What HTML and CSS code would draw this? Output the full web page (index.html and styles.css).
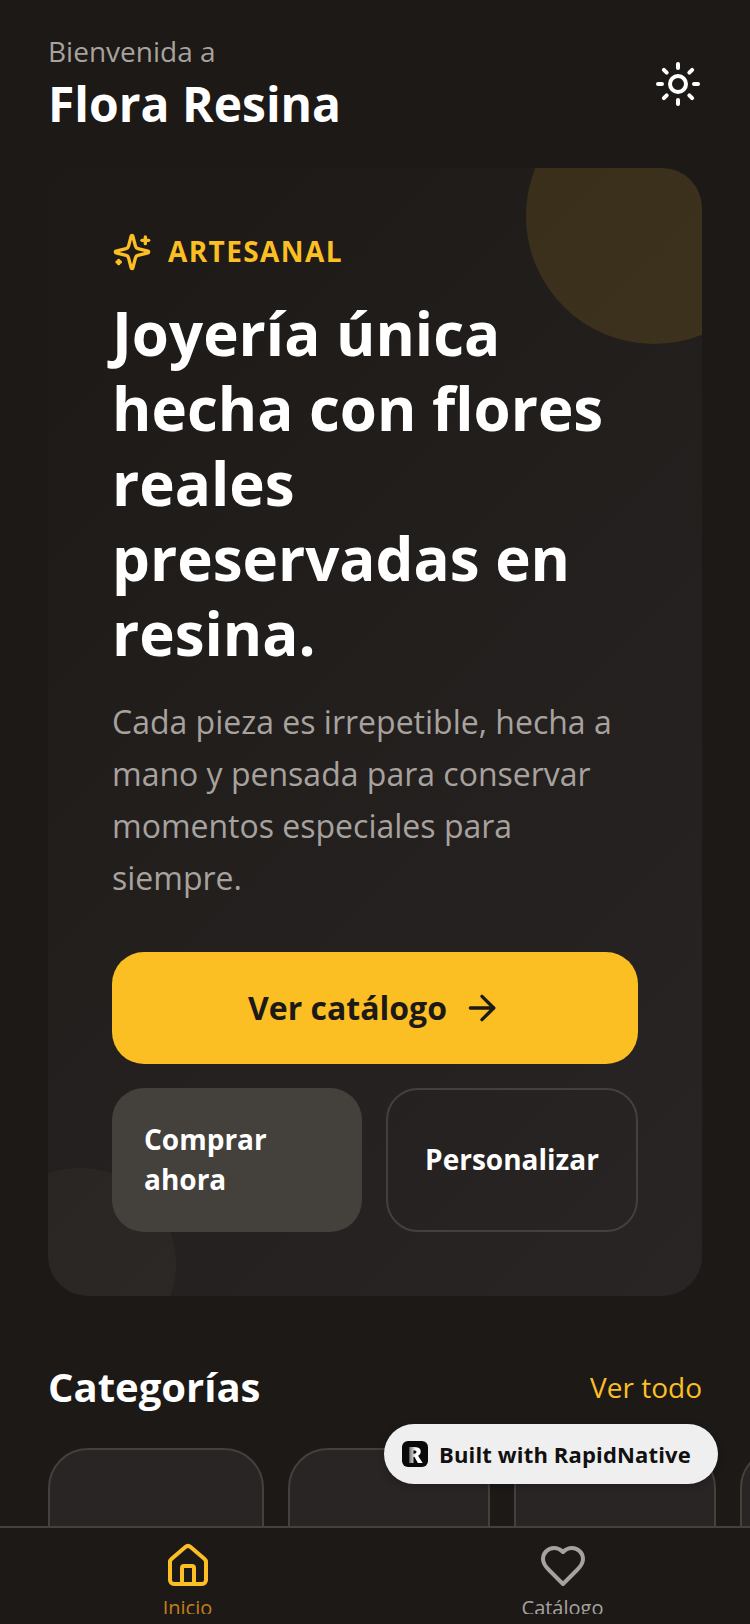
FILE: index.html
```html
<!DOCTYPE html>
<html lang="es">
<head>
    <meta charset="UTF-8">
    <meta name="viewport" content="width=device-width, initial-scale=1.0">
    <title>Flora Resina</title>
    <link rel="stylesheet" href="styles.css">
</head>
<body>
    <div class="app">
        <main class="content">
            <header class="top-bar">
                <div>
                    <p class="welcome">Bienvenida a</p>
                    <h1 class="brand">Flora Resina</h1>
                </div>
                <svg class="icon-sun" viewBox="0 0 24 24" width="48" height="48">
                    <circle cx="12" cy="12" r="4"/>
                    <path d="M12 2v2"/>
                    <path d="M12 20v2"/>
                    <path d="m4.93 4.93 1.41 1.41"/>
                    <path d="m17.66 17.66 1.41 1.41"/>
                    <path d="M2 12h2"/>
                    <path d="M20 12h2"/>
                    <path d="m6.34 17.66-1.41 1.41"/>
                    <path d="m19.07 4.93-1.41 1.41"/>
                </svg>
            </header>

            <section class="hero">
                <div class="hero-circle-top"></div>
                <div class="hero-circle-bottom"></div>
                <div class="hero-body">
                    <div class="hero-tag">
                        <svg class="icon-sparkles" viewBox="0 0 24 24" width="40" height="40">
                            <path d="M9.937 15.5A2 2 0 0 0 8.5 14.063l-6.135-1.582a.5.5 0 0 1 0-.962L8.5 9.936A2 2 0 0 0 9.937 8.5l1.582-6.135a.5.5 0 0 1 .963 0L14.063 8.5A2 2 0 0 0 15.5 9.937l6.135 1.581a.5.5 0 0 1 0 .964L15.5 14.063a2 2 0 0 0-1.437 1.437l-1.582 6.135a.5.5 0 0 1-.963 0z"/>
                            <path d="M20 3v4"/>
                            <path d="M22 5h-4"/>
                            <path d="M4 17v2"/>
                            <path d="M5 18H3"/>
                        </svg>
                        <span class="hero-tag-text">ARTESANAL</span>
                    </div>
                    <h2 class="hero-title">Joyería única hecha con flores reales preservadas en resina.</h2>
                    <p class="hero-text">Cada pieza es irrepetible, hecha a mano y pensada para conservar momentos especiales para siempre.</p>
                    <a class="btn-primary" href="#">
                        <span class="btn-primary-text">Ver catálogo</span>
                        <svg class="icon-arrow" viewBox="0 0 24 24" width="40" height="40">
                            <path d="M5 12h14"/>
                            <path d="m12 5 7 7-7 7"/>
                        </svg>
                    </a>
                    <div class="btn-row">
                        <a class="btn-secondary btn-filled" href="#">Comprar ahora</a>
                        <a class="btn-secondary btn-outline" href="#">Personalizar</a>
                    </div>
                </div>
            </section>

            <section class="categories">
                <div class="section-head">
                    <h2 class="section-title">Categorías</h2>
                    <a class="section-link" href="#">Ver todo</a>
                </div>
                <div class="category-row">
                    <div class="category-card category-wide"></div>
                    <div class="category-card"></div>
                    <div class="category-card"></div>
                    <div class="category-card"></div>
                </div>
            </section>
        </main>

        <nav class="tab-bar">
            <a class="tab tab-active" href="#">
                <svg class="tab-icon" viewBox="0 0 24 24" width="48" height="48">
                    <path d="M15 21v-8a1 1 0 0 0-1-1h-4a1 1 0 0 0-1 1v8"/>
                    <path d="M3 10a2 2 0 0 1 .709-1.528l7-5.999a2 2 0 0 1 2.582 0l7 5.999A2 2 0 0 1 21 10v9a2 2 0 0 1-2 2H5a2 2 0 0 1-2-2z"/>
                </svg>
                <span>Inicio</span>
            </a>
            <a class="tab" href="#">
                <svg class="tab-icon" viewBox="0 0 24 24" width="48" height="48">
                    <path d="M19 14c1.49-1.46 3-3.21 3-5.5A5.5 5.5 0 0 0 16.5 3c-1.76 0-3 .5-4.5 2-1.5-1.5-2.74-2-4.5-2A5.5 5.5 0 0 0 2 8.5c0 2.3 1.5 4.05 3 5.5l7 7Z"/>
                </svg>
                <span>Catálogo</span>
            </a>
        </nav>

        <div class="built-badge">
            <span class="built-logo"><span class="built-logo-letter">R</span></span>
            <span>Built with RapidNative</span>
        </div>
    </div>
</body>
</html>
```

FILE: styles.css
```css
* {
    box-sizing: border-box;
}
body {
    margin: 0;
    background-color: #1c1917;
    font-family: "Open Sans", sans-serif;
    color: #fff;
}
a {
    text-decoration: none;
    color: inherit;
}
svg {
    fill: none;
    stroke: currentColor;
    stroke-width: 2;
    stroke-linecap: round;
    stroke-linejoin: round;
    flex-shrink: 0;
}
.app {
    position: relative;
    width: 750px;
    height: 1624px;
    display: flex;
    flex-direction: column;
    overflow: hidden;
}
.content {
    flex: 1;
    min-height: 0;
    overflow: hidden;
}
.top-bar {
    display: flex;
    justify-content: space-between;
    align-items: center;
    padding: 30px 48px 32px;
}
.icon-sun {
    margin-top: 2px;
}
.welcome {
    margin: 0;
    font-size: 28px;
    line-height: 42px;
    color: #a8a29e;
}
.brand {
    margin: 0;
    font-size: 48px;
    line-height: 64px;
    font-weight: 700;
}
.hero {
    position: relative;
    margin: 0 48px;
    border-radius: 40px;
    overflow: hidden;
    background: linear-gradient(135deg, #1c1917, #292524);
}
.hero-circle-top {
    position: absolute;
    top: -80px;
    right: -80px;
    width: 256px;
    height: 256px;
    border-radius: 50%;
    background-color: rgba(251, 191, 36, 0.12);
}
.hero-circle-bottom {
    position: absolute;
    left: -64px;
    bottom: -64px;
    width: 192px;
    height: 192px;
    border-radius: 50%;
    background-color: rgba(68, 64, 60, 0.2);
}
.hero-body {
    position: relative;
    padding: 64px;
}
.hero-tag {
    display: flex;
    align-items: center;
    gap: 16px;
    color: #fbbf24;
    font-size: 28px;
    font-weight: 700;
    letter-spacing: 1.4px;
}
.hero-tag-text {
    line-height: 36px;
    margin-bottom: 2px;
}
.hero-title {
    margin: 24px 0 25px;
    font-size: 60px;
    line-height: 75px;
    font-weight: 700;
}
.hero-text {
    margin: 0 0 48px;
    font-size: 32px;
    line-height: 52px;
    color: #a8a29e;
}
.btn-primary {
    display: flex;
    justify-content: center;
    align-items: center;
    gap: 15px;
    height: 112px;
    border-radius: 32px;
    background-color: #fbbf24;
    color: #1c1917;
    font-size: 32px;
    font-weight: 700;
}
.btn-primary-text {
    margin-bottom: 2px;
}
.btn-row {
    display: flex;
    gap: 24px;
    margin-top: 24px;
}
.btn-secondary {
    flex: 1;
    min-width: 0;
    display: flex;
    justify-content: center;
    align-items: center;
    padding: 31px 32px 33px;
    border-radius: 32px;
    font-size: 28px;
    line-height: 40px;
    font-weight: 700;
}
.btn-filled {
    background-color: #44403c;
}
.btn-outline {
    padding: 30px 31px 32px;
    border: 2px solid #44403c;
}
.categories {
    padding-top: 63px;
}
.section-head {
    display: flex;
    justify-content: space-between;
    align-items: center;
    padding: 0 48px;
}
.section-title {
    margin: 0;
    font-size: 40px;
    line-height: 56px;
    font-weight: 700;
}
.section-link {
    font-size: 28px;
    line-height: 40px;
    color: #fbbf24;
}
.category-row {
    display: flex;
    gap: 24px;
    padding-left: 48px;
    margin-top: 33px;
}
.category-card {
    flex: 0 0 202px;
    height: 200px;
    border: 2px solid #44403c;
    border-radius: 40px;
    background-color: #292524;
}
.category-wide {
    flex-basis: 216px;
}
.tab-bar {
    display: flex;
    height: 98px;
    border-top: 2px solid #44403c;
    overflow: hidden;
    background-color: #1c1917;
}
.tab {
    flex: 1;
    display: flex;
    flex-direction: column;
    align-items: center;
    height: 86px;
    overflow: hidden;
    padding-top: 14px;
    color: #a8a29e;
    font-size: 20px;
    line-height: 28px;
}
.tab-icon {
    margin-bottom: 4px;
}
.tab-active {
    color: #c47f17;
}
.tab-active .tab-icon {
    color: #fbbf24;
}
.built-badge {
    position: absolute;
    top: 1424px;
    left: 384px;
    display: flex;
    align-items: center;
    gap: 11px;
    height: 60px;
    padding: 0 27px 0 18px;
    border-radius: 30px;
    background-color: #efefef;
    color: #111;
    font-size: 22px;
    font-weight: 700;
    letter-spacing: 0.15px;
    box-shadow: 0 2px 8px rgba(0, 0, 0, 0.25);
}
.built-logo {
    width: 26px;
    height: 26px;
    border-radius: 6px;
    background-color: #0a0a0a;
    font-size: 22px;
    line-height: 26px;
    font-weight: 800;
    text-align: center;
}
.built-logo-letter {
    background: linear-gradient(90deg, #444, #fff 55%);
    -webkit-background-clip: text;
    background-clip: text;
    color: transparent;
}
```
